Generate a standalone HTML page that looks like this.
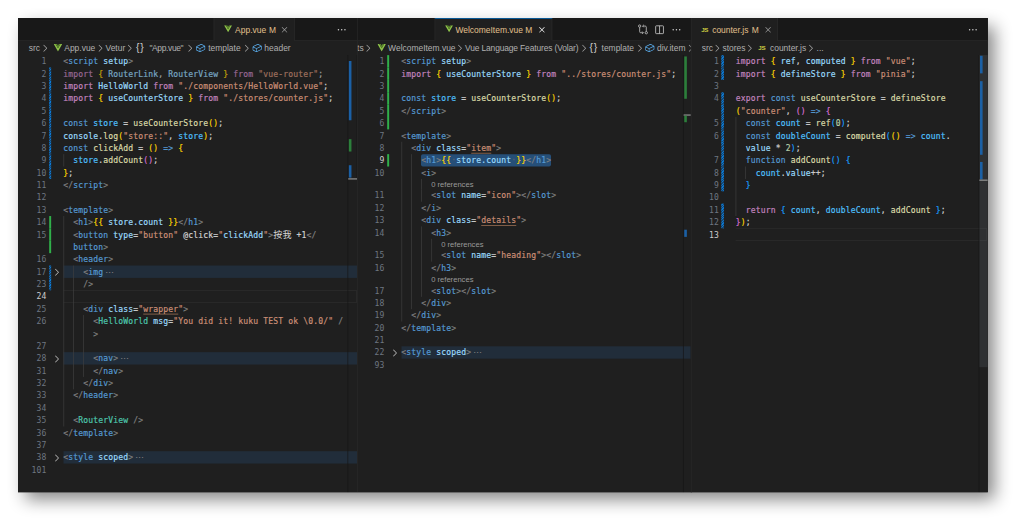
<!DOCTYPE html>
<html lang="en">
<head>
<meta charset="utf-8">
<title>VS Code – App.vue / WelcomeItem.vue / counter.js</title>
<style>
html,body{margin:0;padding:0;background:#fff;}
body{width:1024px;height:529px;overflow:hidden;position:relative;}
#win{position:absolute;left:18px;top:18px;width:1492px;height:727.7px;transform:scale(.65,.6514);transform-origin:0 0;background:#1f1f1f;box-shadow:10.5px 12.5px 25px 0 rgba(0,0,0,.48);font-family:"Liberation Sans",sans-serif;font-size:13px;color:#ccc;overflow:visible;}
.grp{position:absolute;top:0;height:727.7px;overflow:hidden;background:#1f1f1f;}
.tabs{position:absolute;left:0;right:0;top:0;height:35px;background:#181818;border-bottom:1px solid #2b2b2b;box-sizing:border-box;}
.tab{position:absolute;top:0;height:35px;background:#1f1f1f;box-sizing:border-box;border-left:1px solid #2b2b2b;border-right:1px solid #2b2b2b;}
.tab.on{border-top:1px solid #0078d4;}
.tl{position:absolute;top:0;line-height:37px;font-size:13px;color:#e2c08d;white-space:pre;}
.ab{position:absolute;}
.bc{position:absolute;left:0;right:0;top:35px;height:22px;line-height:23.6px;font-size:13px;color:#b0b0b0;white-space:pre;}
.bc span,.bc svg{position:absolute;top:0;}
.bc svg{top:2.6px;width:16px;height:16px;}
.bc svg.vi{top:5px;width:13px;height:11.5px;}
.bc .br{color:#ccc;font-size:16px;letter-spacing:1.2px;line-height:22px;}
.gb{position:absolute;left:0;top:0;bottom:0;width:1px;background:#2f2f2f;}
.js{font-weight:bold;font-size:9.6px;color:#cbcb41;letter-spacing:-.5px;}
.tl.js{line-height:35px;color:#cbcb41;}
.bc .js{line-height:22px;color:#cbcb41;}
.ed{position:absolute;top:0;right:0;height:727.7px;width:100%;}
.cl,.ln{position:absolute;height:19px;line-height:19px;font-family:"DejaVu Sans Mono","Liberation Mono",monospace;font-size:12.4px;letter-spacing:.235px;white-space:pre;}
.cl{left:69.5px;color:#d4d4d4;-webkit-text-stroke:.25px;}
.ln{left:0;width:43.7px;text-align:right;color:#6e7681;}
.ln.act{color:#ccc;}
.gut{position:absolute;left:48px;width:3px;height:19px;}
.gut.m{background:repeating-linear-gradient(-45deg,#0a7ad6 0 1.4px,#164a78 1.4px 2.8px);width:3.4px;left:47.8px;}
.gut.a{background:#30b04a;width:2.5px;}
.foldbg{position:absolute;left:69.5px;right:0;height:19px;background:#212d3a;}
.curln{position:absolute;left:69.5px;right:1px;height:19px;box-sizing:border-box;border:1.5px solid #2e2e2e;border-left:0;}
.chev{position:absolute;left:52px;width:16px;height:16px;}
.ig{position:absolute;width:1px;background:#404040;}
.lens{position:absolute;height:16px;line-height:17px;font-size:11.7px;color:#999;white-space:pre;}
.fold{color:#808080;display:inline-block;margin-left:3px;font-family:"DejaVu Sans","Liberation Sans",sans-serif;}
.ruler{position:absolute;right:0;top:57px;width:14px;bottom:0;border-left:1px solid #141414;box-sizing:border-box;}
.ruler i{position:absolute;display:block;}
.k{color:#c586c0}.b{color:#569cd6}.v{color:#9cdcfe}.f{color:#dcdcaa}.s{color:#ce9178}.n{color:#b5cea8}
.t{color:#808080}.c{color:#4ec9b0}.d{color:#d4d4d4}.y{color:#ffd700}.p{color:#da70d6}.l{color:#179fff}
.x{color:#4fc1ff}.w{color:#d4d4d4}.u{color:#ce9178;text-decoration:underline;text-decoration-color:#b5805f;text-underline-offset:2.5px}
.selbg{background:#264f78;display:inline-block;height:19px;border-radius:3px;}
.ws{color:#5a6470}
.cj{font-family:"Liberation Mono","Noto Sans CJK TC",sans-serif;font-size:14px;letter-spacing:0;color:#d4d4d4;-webkit-text-stroke:0;}
.cl.dim{opacity:.72;}

</style>
</head>
<body>
<div id="win">

<!-- ================= group 1 : App.vue ================= -->
<div class="grp" style="left:0;width:521.5px">
  <div class="tabs"></div>
  <div class="tab" style="left:301px;width:125px"></div>
  <svg class="ab" style="left:316.6px;top:10.9px" width="12.5" height="11.2" viewBox="0 0 16 14"><path d="M0 0h3.4L8 8 12.6 0H16L8 14z" fill="#8dc149"/><path d="M3.4 0h2.9L8 3l1.7-3h2.9L8 8z" fill="#5d8a2c"/></svg>
  <span class="tl" style="left:334px">App.vue</span>
  <span class="tl" style="left:386px">M</span>
  <svg class="ab" style="left:402.3px;top:10px" width="16" height="16" viewBox="0 0 16 16"><path d="M8 8.7l3.6 3.7.7-.7L8.7 8l3.6-3.6-.7-.7L8 7.3 4.4 3.7l-.7.7L7.3 8l-3.6 3.7.7.7z" fill="#a0a0a0"/></svg>
  <svg class="ab" style="left:489.8px;top:10px" width="16" height="16" viewBox="0 0 16 16"><circle cx="3" cy="8" r="1.15" fill="#d0d0d0"/><circle cx="8" cy="8" r="1.15" fill="#d0d0d0"/><circle cx="13" cy="8" r="1.15" fill="#d0d0d0"/></svg>
  <div class="bc">
    <span style="left:16.6px">src</span>
    <svg style="left:33.5px" viewBox="0 0 16 16"><path d="M5.7 13.7 5 13l4.6-4.6L5 3.7l.7-.7 5 5v.7z" fill="#a9a9a9"/></svg>
    <svg class="vi" style="left:55px" viewBox="0 0 16 14"><path d="M0 0h3.4L8 8 12.6 0H16L8 14z" fill="#8dc149"/><path d="M3.4 0h2.9L8 3l1.7-3h2.9L8 8z" fill="#5d8a2c"/></svg>
    <span style="left:71.2px">App.vue</span>
    <svg style="left:118.7px" viewBox="0 0 16 16"><path d="M5.7 13.7 5 13l4.6-4.6L5 3.7l.7-.7 5 5v.7z" fill="#a9a9a9"/></svg>
    <span style="left:134.6px">Vetur</span>
    <svg style="left:164.4px" viewBox="0 0 16 16"><path d="M5.7 13.7 5 13l4.6-4.6L5 3.7l.7-.7 5 5v.7z" fill="#a9a9a9"/></svg>
    <span class="br" style="left:181.5px">{}</span>
    <span style="left:202.2px;letter-spacing:-.55px">"App.vue"</span>
    <svg style="left:256.9px" viewBox="0 0 16 16"><path d="M5.7 13.7 5 13l4.6-4.6L5 3.7l.7-.7 5 5v.7z" fill="#a9a9a9"/></svg>
    <svg style="left:273.2px" viewBox="0 0 16 16"><path d="M14.45 4.5l-5-2.500h-.9l-7 3.500-.55.890v4.500l.55.900 5 2.500h.9l7-3.500.55-.900v-4.500l-.55-.890zm-8 8.640l-4.500-2.250V7.170l4.500 2v3.970zm.5-4.800L2.290 6.230l6.660-3.340 4.450 2.230-6.450 3.220zm7 1.550l-6.500 3.250V9.210l6.500-3.250v3.930z" fill="#5cb2f5"/></svg>
    <span style="left:292.6px">template</span>
    <svg style="left:344.2px" viewBox="0 0 16 16"><path d="M5.7 13.7 5 13l4.6-4.6L5 3.7l.7-.7 5 5v.7z" fill="#a9a9a9"/></svg>
    <svg style="left:360.1px" viewBox="0 0 16 16"><path d="M14.45 4.5l-5-2.500h-.9l-7 3.500-.55.890v4.500l.55.900 5 2.500h.9l7-3.500.55-.900v-4.500l-.55-.890zm-8 8.640l-4.500-2.250V7.170l4.500 2v3.970zm.5-4.800L2.290 6.230l6.660-3.340 4.450 2.230-6.450 3.220zm7 1.550l-6.500 3.250V9.210l6.500-3.250v3.930z" fill="#5cb2f5"/></svg>
    <span style="left:379px">header</span>
  </div>
<div class="ed" style="left:0px">
<div class="ln" style="top:57px">1</div>
<div class="cl" style="top:57px"><span class="t">&lt;</span><span class="b">script</span><span class="d"> </span><span class="v">setup</span><span class="t">&gt;</span></div>
<div class="gut m" style="top:76px"></div>
<div class="ln" style="top:76px">2</div>
<div class="cl dim" style="top:76px"><span class="k">import</span><span class="d"> </span><span class="y">{</span><span class="v"> RouterLink</span><span class="d">,</span><span class="v"> RouterView </span><span class="y">}</span><span class="k"> from</span><span class="s"> "vue-router"</span><span class="d">;</span></div>
<div class="gut m" style="top:95px"></div>
<div class="ln" style="top:95px">3</div>
<div class="cl" style="top:95px"><span class="k">import</span><span class="v"> HelloWorld</span><span class="k"> from</span><span class="s"> "./components/HelloWorld.vue"</span><span class="d">;</span></div>
<div class="gut m" style="top:114px"></div>
<div class="ln" style="top:114px">4</div>
<div class="cl" style="top:114px"><span class="k">import</span><span class="d"> </span><span class="y">{</span><span class="v"> useCounterStore </span><span class="y">}</span><span class="k"> from</span><span class="s"> "./stores/counter.js"</span><span class="d">;</span></div>
<div class="gut m" style="top:133px"></div>
<div class="ln" style="top:133px">5</div>
<div class="gut m" style="top:152px"></div>
<div class="ln" style="top:152px">6</div>
<div class="cl" style="top:152px"><span class="b">const</span><span class="x"> store</span><span class="d"> = </span><span class="f">useCounterStore</span><span class="y">()</span><span class="d">;</span></div>
<div class="gut m" style="top:171px"></div>
<div class="ln" style="top:171px">7</div>
<div class="cl" style="top:171px"><span class="v">console</span><span class="d">.</span><span class="f">log</span><span class="y">(</span><span class="s">"store::"</span><span class="d">,</span><span class="x"> store</span><span class="y">)</span><span class="d">;</span></div>
<div class="gut m" style="top:190px"></div>
<div class="ln" style="top:190px">8</div>
<div class="cl" style="top:190px"><span class="b">const</span><span class="f"> clickAdd</span><span class="d"> = </span><span class="y">()</span><span class="b"> =&gt;</span><span class="d"> </span><span class="y">{</span></div>
<div class="gut m" style="top:209px"></div>
<div class="ln" style="top:209px">9</div>
<div class="cl" style="top:209px"><span class="d">  </span><span class="x">store</span><span class="d">.</span><span class="f">addCount</span><span class="p">()</span><span class="d">;</span></div>
<div class="gut m" style="top:228px"></div>
<div class="ln" style="top:228px">10</div>
<div class="cl" style="top:228px"><span class="y">}</span><span class="d">;</span></div>
<div class="ln" style="top:247px">11</div>
<div class="cl" style="top:247px"><span class="t">&lt;/</span><span class="b">script</span><span class="t">&gt;</span></div>
<div class="ln" style="top:266px">12</div>
<div class="ln" style="top:285px">13</div>
<div class="cl" style="top:285px"><span class="t">&lt;</span><span class="b">template</span><span class="t">&gt;</span></div>
<div class="gut a" style="top:304px"></div>
<div class="ln" style="top:304px">14</div>
<div class="cl" style="top:304px"><span class="d">  </span><span class="t">&lt;</span><span class="b">h1</span><span class="t">&gt;</span><span class="y">{{</span><span class="v"> store.count </span><span class="y">}}</span><span class="t">&lt;/</span><span class="b">h1</span><span class="t">&gt;</span></div>
<div class="gut a" style="top:323px"></div>
<div class="ln" style="top:323px">15</div>
<div class="cl" style="top:323px"><span class="d">  </span><span class="t">&lt;</span><span class="b">button</span><span class="v"> type</span><span class="d">=</span><span class="s">"button"</span><span class="w"> @click</span><span class="d">=</span><span class="s">"</span><span class="v">clickAdd</span><span class="s">"</span><span class="t">&gt;</span><span class="cj">按我</span><span class="d"> +1</span><span class="t">&lt;/</span></div>
<div class="gut a" style="top:342px"></div>
<div class="cl" style="top:342px"><span class="d">  </span><span class="b">button</span><span class="t">&gt;</span></div>
<div class="ln" style="top:361px">16</div>
<div class="cl" style="top:361px"><span class="d">  </span><span class="t">&lt;</span><span class="b">header</span><span class="t">&gt;</span></div>
<div class="foldbg" style="top:380px"></div>
<svg class="chev" style="top:381.5px" viewBox="0 0 16 16"><path d="M5.7 13.7 5 13l4.6-4.6L5 3.7l.7-.7 5 5v.7z" fill="#c5c5c5"/></svg>
<div class="gut m" style="top:380px"></div>
<div class="ln" style="top:380px">17</div>
<div class="cl" style="top:380px"><span class="d">    </span><span class="t">&lt;</span><span class="b">img</span><span class="fold">⋯</span></div>
<div class="gut m" style="top:399px"></div>
<div class="ln" style="top:399px">23</div>
<div class="cl" style="top:399px"><span class="d">    </span><span class="t">/&gt;</span></div>
<div class="curln" style="top:418px"></div>
<div class="ln act" style="top:418px">24</div>
<div class="ln" style="top:437px">25</div>
<div class="cl" style="top:437px"><span class="d">    </span><span class="t">&lt;</span><span class="b">div</span><span class="v"> class</span><span class="d">=</span><span class="s">"</span><span class="u">wrapper</span><span class="s">"</span><span class="t">&gt;</span></div>
<div class="ln" style="top:456px">26</div>
<div class="cl" style="top:456px"><span class="d">      </span><span class="t">&lt;</span><span class="c">HelloWorld</span><span class="v"> msg</span><span class="d">=</span><span class="s">"You did it! kuku TEST ok \0.0/"</span><span class="t"> /</span></div>
<div class="cl" style="top:475px"><span class="d">      </span><span class="t">&gt;</span></div>
<div class="ln" style="top:494px">27</div>
<div class="foldbg" style="top:513px"></div>
<svg class="chev" style="top:514.5px" viewBox="0 0 16 16"><path d="M5.7 13.7 5 13l4.6-4.6L5 3.7l.7-.7 5 5v.7z" fill="#c5c5c5"/></svg>
<div class="ln" style="top:513px">28</div>
<div class="cl" style="top:513px"><span class="d">      </span><span class="t">&lt;</span><span class="b">nav</span><span class="t">&gt;</span><span class="fold">⋯</span></div>
<div class="ln" style="top:532px">31</div>
<div class="cl" style="top:532px"><span class="d">      </span><span class="t">&lt;/</span><span class="b">nav</span><span class="t">&gt;</span></div>
<div class="ln" style="top:551px">32</div>
<div class="cl" style="top:551px"><span class="d">    </span><span class="t">&lt;/</span><span class="b">div</span><span class="t">&gt;</span></div>
<div class="ln" style="top:570px">33</div>
<div class="cl" style="top:570px"><span class="d">  </span><span class="t">&lt;/</span><span class="b">header</span><span class="t">&gt;</span></div>
<div class="ln" style="top:589px">34</div>
<div class="ln" style="top:608px">35</div>
<div class="cl" style="top:608px"><span class="d">  </span><span class="t">&lt;</span><span class="c">RouterView</span><span class="t"> /&gt;</span></div>
<div class="ln" style="top:627px">36</div>
<div class="cl" style="top:627px"><span class="t">&lt;/</span><span class="b">template</span><span class="t">&gt;</span></div>
<div class="ln" style="top:646px">37</div>
<div class="foldbg" style="top:665px"></div>
<svg class="chev" style="top:666.5px" viewBox="0 0 16 16"><path d="M5.7 13.7 5 13l4.6-4.6L5 3.7l.7-.7 5 5v.7z" fill="#c5c5c5"/></svg>
<div class="ln" style="top:665px">38</div>
<div class="cl" style="top:665px"><span class="t">&lt;</span><span class="b">style</span><span class="v"> scoped</span><span class="t">&gt;</span><span class="fold">⋯</span></div>
<div class="ln" style="top:684px">101</div>
<div class="ig" style="left:69.5px;top:209px;height:19px"></div>
<div class="ig" style="left:69.5px;top:304px;height:323px"></div>
<div class="ig" style="left:84.9px;top:380px;height:190px"></div>
<div class="ig" style="left:100.3px;top:456px;height:95px"></div>
</div>
  <div class="ruler" style="width:15px">
    <i style="left:0;width:14px;top:0;height:190px;border:1px solid #161616;border-left:0;border-top:0;box-sizing:border-box"></i>
    <i style="left:1px;width:4.8px;top:9px;height:90.5px;background:#1b60a5"></i>
    <i style="left:1px;width:4.8px;top:128.5px;height:19.5px;background:#2c7f3b"></i>
    <i style="left:1px;width:4.8px;top:169px;height:19px;background:#1b60a5"></i>
    <i style="left:0;width:14px;top:188.5px;height:2px;background:#8a8a8a"></i>
  </div>
</div>

<!-- ================= group 2 : WelcomeItem.vue ================= -->
<div class="grp" style="left:521.5px;width:515px">
  <div class="tabs"></div>
  <div class="tab on" style="left:119.5px;width:180.5px"></div>
  <svg class="ab" style="left:135.1px;top:10.9px" width="12.5" height="11.2" viewBox="0 0 16 14"><path d="M0 0h3.4L8 8 12.6 0H16L8 14z" fill="#8dc149"/><path d="M3.4 0h2.9L8 3l1.7-3h2.9L8 8z" fill="#5d8a2c"/></svg>
  <span class="tl" style="left:151.5px">WelcomeItem.vue</span>
  <span class="tl" style="left:259px">M</span>
  <svg class="ab" style="left:276.2px;top:10px" width="16" height="16" viewBox="0 0 16 16"><path d="M8 8.7l3.6 3.7.7-.7L8.7 8l3.6-3.6-.7-.7L8 7.3 4.4 3.7l-.7.7L7.3 8l-3.6 3.7.7.7z" fill="#fff"/></svg>
  <!-- compare changes -->
  <svg class="ab" style="left:431px;top:9px" width="17" height="17" viewBox="0 0 16 16" fill="none" stroke="#d0d0d0" stroke-width="1.1"><circle cx="3.2" cy="3.2" r="1.7"/><circle cx="12.8" cy="12.8" r="1.7"/><path d="M3.2 4.9v6.4a1.5 1.5 0 0 0 1.5 1.5h3.6M6.8 11l1.8 1.8-1.8 1.8M12.8 11.1V4.7a1.5 1.5 0 0 0-1.5-1.5H7.7M9.2 1.4L7.4 3.2 9.2 5"/></svg>
  <!-- split editor -->
  <svg class="ab" style="left:457.5px;top:10px" width="16" height="16" viewBox="0 0 16 16" fill="none" stroke="#d0d0d0" stroke-width="1.2"><rect x="2" y="2" width="12" height="12" rx="1"/><path d="M8 2v12"/></svg>
  <svg class="ab" style="left:483.7px;top:10px" width="16" height="16" viewBox="0 0 16 16"><circle cx="3" cy="8" r="1.15" fill="#d0d0d0"/><circle cx="8" cy="8" r="1.15" fill="#d0d0d0"/><circle cx="13" cy="8" r="1.15" fill="#d0d0d0"/></svg>
  <div class="bc">
    <span style="left:0.2px">ts</span>
    <svg style="left:9.7px" viewBox="0 0 16 16"><path d="M5.7 13.7 5 13l4.6-4.6L5 3.7l.7-.7 5 5v.7z" fill="#a9a9a9"/></svg>
    <svg class="vi" style="left:31px" viewBox="0 0 16 14"><path d="M0 0h3.4L8 8 12.6 0H16L8 14z" fill="#8dc149"/><path d="M3.4 0h2.9L8 3l1.7-3h2.9L8 8z" fill="#5d8a2c"/></svg>
    <span style="left:47.9px">WelcomeItem.vue</span>
    <svg style="left:150.3px" viewBox="0 0 16 16"><path d="M5.7 13.7 5 13l4.6-4.6L5 3.7l.7-.7 5 5v.7z" fill="#a9a9a9"/></svg>
    <span style="left:166.2px;letter-spacing:-.225px">Vue Language Features (Volar)</span>
    <svg style="left:341.9px" viewBox="0 0 16 16"><path d="M5.7 13.7 5 13l4.6-4.6L5 3.7l.7-.7 5 5v.7z" fill="#a9a9a9"/></svg>
    <span class="br" style="left:357.7px">{}</span>
    <span style="left:376.3px">template</span>
    <svg style="left:427.2px" viewBox="0 0 16 16"><path d="M5.7 13.7 5 13l4.6-4.6L5 3.7l.7-.7 5 5v.7z" fill="#a9a9a9"/></svg>
    <svg style="left:442.6px" viewBox="0 0 16 16"><path d="M14.45 4.5l-5-2.500h-.9l-7 3.500-.55.890v4.500l.55.900 5 2.500h.9l7-3.500.55-.900v-4.500l-.55-.890zm-8 8.640l-4.500-2.250V7.170l4.500 2v3.970zm.5-4.800L2.290 6.230l6.660-3.340 4.450 2.230-6.450 3.220zm7 1.550l-6.500 3.250V9.210l6.500-3.250v3.930z" fill="#5cb2f5"/></svg>
    <span style="left:461.5px">div.item</span>
    <svg style="left:505.5px" viewBox="0 0 16 16"><path d="M5.7 13.7 5 13l4.6-4.6L5 3.7l.7-.7 5 5v.7z" fill="#a9a9a9"/></svg>
  </div>
<div class="ed" style="left:-1.5px">
<div class="gut a" style="top:57px"></div>
<div class="ln" style="top:57px">1</div>
<div class="cl" style="top:57px"><span class="t">&lt;</span><span class="b">script</span><span class="d"> </span><span class="v">setup</span><span class="t">&gt;</span></div>
<div class="gut a" style="top:76px"></div>
<div class="ln" style="top:76px">2</div>
<div class="cl" style="top:76px"><span class="k">import</span><span class="d"> </span><span class="y">{</span><span class="v"> useCounterStore </span><span class="y">}</span><span class="k"> from</span><span class="s"> "../stores/counter.js"</span><span class="d">;</span></div>
<div class="gut a" style="top:95px"></div>
<div class="ln" style="top:95px">3</div>
<div class="gut a" style="top:114px"></div>
<div class="ln" style="top:114px">4</div>
<div class="cl" style="top:114px"><span class="b">const</span><span class="x"> store</span><span class="d"> = </span><span class="f">useCounterStore</span><span class="y">()</span><span class="d">;</span></div>
<div class="gut a" style="top:133px"></div>
<div class="ln" style="top:133px">5</div>
<div class="cl" style="top:133px"><span class="t">&lt;/</span><span class="b">script</span><span class="t">&gt;</span></div>
<div class="gut a" style="top:152px"></div>
<div class="ln" style="top:152px">6</div>
<div class="ln" style="top:171px">7</div>
<div class="cl" style="top:171px"><span class="t">&lt;</span><span class="b">template</span><span class="t">&gt;</span></div>
<div class="ln" style="top:190px">8</div>
<div class="cl" style="top:190px"><span class="d">  </span><span class="t">&lt;</span><span class="b">div</span><span class="v"> class</span><span class="d">=</span><span class="s">"</span><span class="u">item</span><span class="s">"</span><span class="t">&gt;</span></div>
<div class="gut a" style="top:209px"></div>
<div class="ln act" style="top:209px">9</div>
<div class="cl" style="top:209px"><span class="d">    </span><span class="selbg"><span class="t">&lt;</span><span class="b">h1</span><span class="t">&gt;</span><span class="y">{{</span><span class="ws">·</span><span class="v">store.count</span><span class="ws">·</span><span class="y">}}</span><span class="t">&lt;/</span><span class="b">h1</span><span class="t">&gt;</span></span></div>
<div class="ln" style="top:228px">10</div>
<div class="cl" style="top:228px"><span class="d">    </span><span class="t">&lt;</span><span class="b">i</span><span class="t">&gt;</span></div>
<div class="lens" style="top:247px;left:115.7px">0 references</div>
<div class="ln" style="top:263.1px">11</div>
<div class="cl" style="top:263.1px"><span class="d">      </span><span class="t">&lt;</span><span class="b">slot</span><span class="v"> name</span><span class="d">=</span><span class="s">"icon"</span><span class="t">&gt;&lt;/</span><span class="b">slot</span><span class="t">&gt;</span></div>
<div class="ln" style="top:282.1px">12</div>
<div class="cl" style="top:282.1px"><span class="d">    </span><span class="t">&lt;/</span><span class="b">i</span><span class="t">&gt;</span></div>
<div class="ln" style="top:301.1px">13</div>
<div class="cl" style="top:301.1px"><span class="d">    </span><span class="t">&lt;</span><span class="b">div</span><span class="v"> class</span><span class="d">=</span><span class="s">"</span><span class="u">details</span><span class="s">"</span><span class="t">&gt;</span></div>
<div class="ln" style="top:320.1px">14</div>
<div class="cl" style="top:320.1px"><span class="d">      </span><span class="t">&lt;</span><span class="b">h3</span><span class="t">&gt;</span></div>
<div class="lens" style="top:339.1px;left:131.1px">0 references</div>
<div class="ln" style="top:355.2px">15</div>
<div class="cl" style="top:355.2px"><span class="d">        </span><span class="t">&lt;</span><span class="b">slot</span><span class="v"> name</span><span class="d">=</span><span class="s">"heading"</span><span class="t">&gt;&lt;/</span><span class="b">slot</span><span class="t">&gt;</span></div>
<div class="ln" style="top:374.2px">16</div>
<div class="cl" style="top:374.2px"><span class="d">      </span><span class="t">&lt;/</span><span class="b">h3</span><span class="t">&gt;</span></div>
<div class="lens" style="top:393.2px;left:115.7px">0 references</div>
<div class="ln" style="top:409.3px">17</div>
<div class="cl" style="top:409.3px"><span class="d">      </span><span class="t">&lt;</span><span class="b">slot</span><span class="t">&gt;&lt;/</span><span class="b">slot</span><span class="t">&gt;</span></div>
<div class="ln" style="top:428.3px">18</div>
<div class="cl" style="top:428.3px"><span class="d">    </span><span class="t">&lt;/</span><span class="b">div</span><span class="t">&gt;</span></div>
<div class="ln" style="top:447.3px">19</div>
<div class="cl" style="top:447.3px"><span class="d">  </span><span class="t">&lt;/</span><span class="b">div</span><span class="t">&gt;</span></div>
<div class="ln" style="top:466.3px">20</div>
<div class="cl" style="top:466.3px"><span class="t">&lt;/</span><span class="b">template</span><span class="t">&gt;</span></div>
<div class="ln" style="top:485.3px">21</div>
<div class="foldbg" style="top:504.3px"></div>
<svg class="chev" style="top:505.8px" viewBox="0 0 16 16"><path d="M5.7 13.7 5 13l4.6-4.6L5 3.7l.7-.7 5 5v.7z" fill="#c5c5c5"/></svg>
<div class="ln" style="top:504.3px">22</div>
<div class="cl" style="top:504.3px"><span class="t">&lt;</span><span class="b">style</span><span class="v"> scoped</span><span class="t">&gt;</span><span class="fold">⋯</span></div>
<div class="ln" style="top:523.3px">93</div>
<div class="ig" style="left:69.5px;top:190px;height:276.3px"></div>
<div class="ig" style="left:84.9px;top:209px;height:238.3px"></div>
<div class="ig" style="left:100.3px;top:247px;height:16.1px"></div>
<div class="ig" style="left:100.3px;top:263.1px;height:19px"></div>
<div class="ig" style="left:100.3px;top:320.1px;height:108.2px"></div>
<div class="ig" style="left:115.7px;top:339.1px;height:35.1px"></div>
</div>
  <div class="ruler">
    <i style="left:1px;width:4px;top:2px;height:65px;background:#2c7f3b"></i>
    <i style="left:0;width:13px;top:91px;height:2px;background:#8a8a8a"></i>
    <i style="left:1px;width:4px;top:93px;height:10px;background:#2c7f3b"></i>
    <i style="left:1px;width:4px;top:268px;height:11px;background:#1b60a5"></i>
  </div>
  <div class="gb"></div>
</div>

<!-- ================= group 3 : counter.js ================= -->
<div class="grp" style="left:1034.6px;width:457.4px">
  <div class="tabs"></div>
  <div class="tab" style="left:0;width:134.2px;border-left:0"></div>
  <span class="tl js" style="left:16.4px">JS</span>
  <span class="tl" style="left:33.4px">counter.js</span>
  <span class="tl" style="left:94.4px">M</span>
  <svg class="ab" style="left:111.2px;top:10px" width="16" height="16" viewBox="0 0 16 16"><path d="M8 8.7l3.6 3.7.7-.7L8.7 8l3.6-3.6-.7-.7L8 7.3 4.4 3.7l-.7.7L7.3 8l-3.6 3.7.7.7z" fill="#a0a0a0"/></svg>
  <svg class="ab" style="left:426.4px;top:10px" width="16" height="16" viewBox="0 0 16 16"><circle cx="3" cy="8" r="1.15" fill="#d0d0d0"/><circle cx="8" cy="8" r="1.15" fill="#d0d0d0"/><circle cx="13" cy="8" r="1.15" fill="#d0d0d0"/></svg>
  <div class="bc">
    <span style="left:17.2px">src</span>
    <svg style="left:33.9px" viewBox="0 0 16 16"><path d="M5.7 13.7 5 13l4.6-4.6L5 3.7l.7-.7 5 5v.7z" fill="#a9a9a9"/></svg>
    <span style="left:49.2px">stores</span>
    <svg style="left:83.9px" viewBox="0 0 16 16"><path d="M5.7 13.7 5 13l4.6-4.6L5 3.7l.7-.7 5 5v.7z" fill="#a9a9a9"/></svg>
    <span class="js" style="left:104.4px">JS</span>
    <span style="left:122.3px">counter.js</span>
    <svg style="left:177.9px" viewBox="0 0 16 16"><path d="M5.7 13.7 5 13l4.6-4.6L5 3.7l.7-.7 5 5v.7z" fill="#a9a9a9"/></svg>
    <span style="left:194px">...</span>
  </div>
<div class="ed" style="left:0px">
<div class="gut m" style="top:57px"></div>
<div class="ln" style="top:57px">1</div>
<div class="cl" style="top:57px"><span class="k">import</span><span class="d"> </span><span class="y">{</span><span class="v"> ref</span><span class="d">,</span><span class="v"> computed </span><span class="y">}</span><span class="k"> from</span><span class="s"> "vue"</span><span class="d">;</span></div>
<div class="gut m" style="top:76px"></div>
<div class="ln" style="top:76px">2</div>
<div class="cl" style="top:76px"><span class="k">import</span><span class="d"> </span><span class="y">{</span><span class="v"> defineStore </span><span class="y">}</span><span class="k"> from</span><span class="s"> "pinia"</span><span class="d">;</span></div>
<div class="ln" style="top:95px">3</div>
<div class="gut m" style="top:114px"></div>
<div class="ln" style="top:114px">4</div>
<div class="cl" style="top:114px"><span class="k">export</span><span class="b"> const</span><span class="f"> useCounterStore</span><span class="d"> = </span><span class="f">defineStore</span></div>
<div class="gut m" style="top:133px"></div>
<div class="cl" style="top:133px"><span class="y">(</span><span class="s">"counter"</span><span class="d">, </span><span class="p">()</span><span class="b"> =&gt;</span><span class="d"> </span><span class="p">{</span></div>
<div class="gut m" style="top:152px"></div>
<div class="ln" style="top:152px">5</div>
<div class="cl" style="top:152px"><span class="d">  </span><span class="b">const</span><span class="x"> count</span><span class="d"> = </span><span class="f">ref</span><span class="l">(</span><span class="n">0</span><span class="l">)</span><span class="d">;</span></div>
<div class="gut m" style="top:171px"></div>
<div class="ln" style="top:171px">6</div>
<div class="cl" style="top:171px"><span class="d">  </span><span class="b">const</span><span class="x"> doubleCount</span><span class="d"> = </span><span class="f">computed</span><span class="l">(</span><span class="y">()</span><span class="b"> =&gt;</span><span class="x"> count</span><span class="d">.</span></div>
<div class="gut m" style="top:190px"></div>
<div class="cl" style="top:190px"><span class="d">  </span><span class="v">value</span><span class="d"> * </span><span class="n">2</span><span class="l">)</span><span class="d">;</span></div>
<div class="gut m" style="top:209px"></div>
<div class="ln" style="top:209px">7</div>
<div class="cl" style="top:209px"><span class="d">  </span><span class="b">function</span><span class="f"> addCount</span><span class="l">()</span><span class="d"> </span><span class="l">{</span></div>
<div class="gut m" style="top:228px"></div>
<div class="ln" style="top:228px">8</div>
<div class="cl" style="top:228px"><span class="d">    </span><span class="x">count</span><span class="d">.</span><span class="v">value</span><span class="d">++;</span></div>
<div class="gut m" style="top:247px"></div>
<div class="ln" style="top:247px">9</div>
<div class="cl" style="top:247px"><span class="d">  </span><span class="l">}</span></div>
<div class="ln" style="top:266px">10</div>
<div class="gut m" style="top:285px"></div>
<div class="ln" style="top:285px">11</div>
<div class="cl" style="top:285px"><span class="d">  </span><span class="k">return</span><span class="d"> </span><span class="l">{</span><span class="x"> count</span><span class="d">,</span><span class="x"> doubleCount</span><span class="d">,</span><span class="f"> addCount </span><span class="l">}</span><span class="d">;</span></div>
<div class="gut m" style="top:304px"></div>
<div class="ln" style="top:304px">12</div>
<div class="cl" style="top:304px"><span class="p">}</span><span class="y">)</span><span class="d">;</span></div>
<div class="curln" style="top:323px"></div>
<div class="ln act" style="top:323px">13</div>
<div class="ig" style="left:69.5px;top:152px;height:152px"></div>
<div class="ig" style="left:84.9px;top:228px;height:19px"></div>
</div>
  <div class="ruler">
    <i style="left:0;width:13px;top:0;height:479px;background:rgba(110,118,129,.2)"></i>
    <i style="left:1px;width:4px;top:1px;height:27px;background:#1b60a5"></i>
    <i style="left:1px;width:4px;top:40px;height:113px;background:#1b60a5"></i>
    <i style="left:1px;width:4px;top:164px;height:27px;background:#1b60a5"></i>
    <i style="left:0;width:13px;top:191px;height:2px;background:#8a8a8a"></i>
  </div>
  <div class="gb"></div>
</div>

</div>
</body>
</html>
